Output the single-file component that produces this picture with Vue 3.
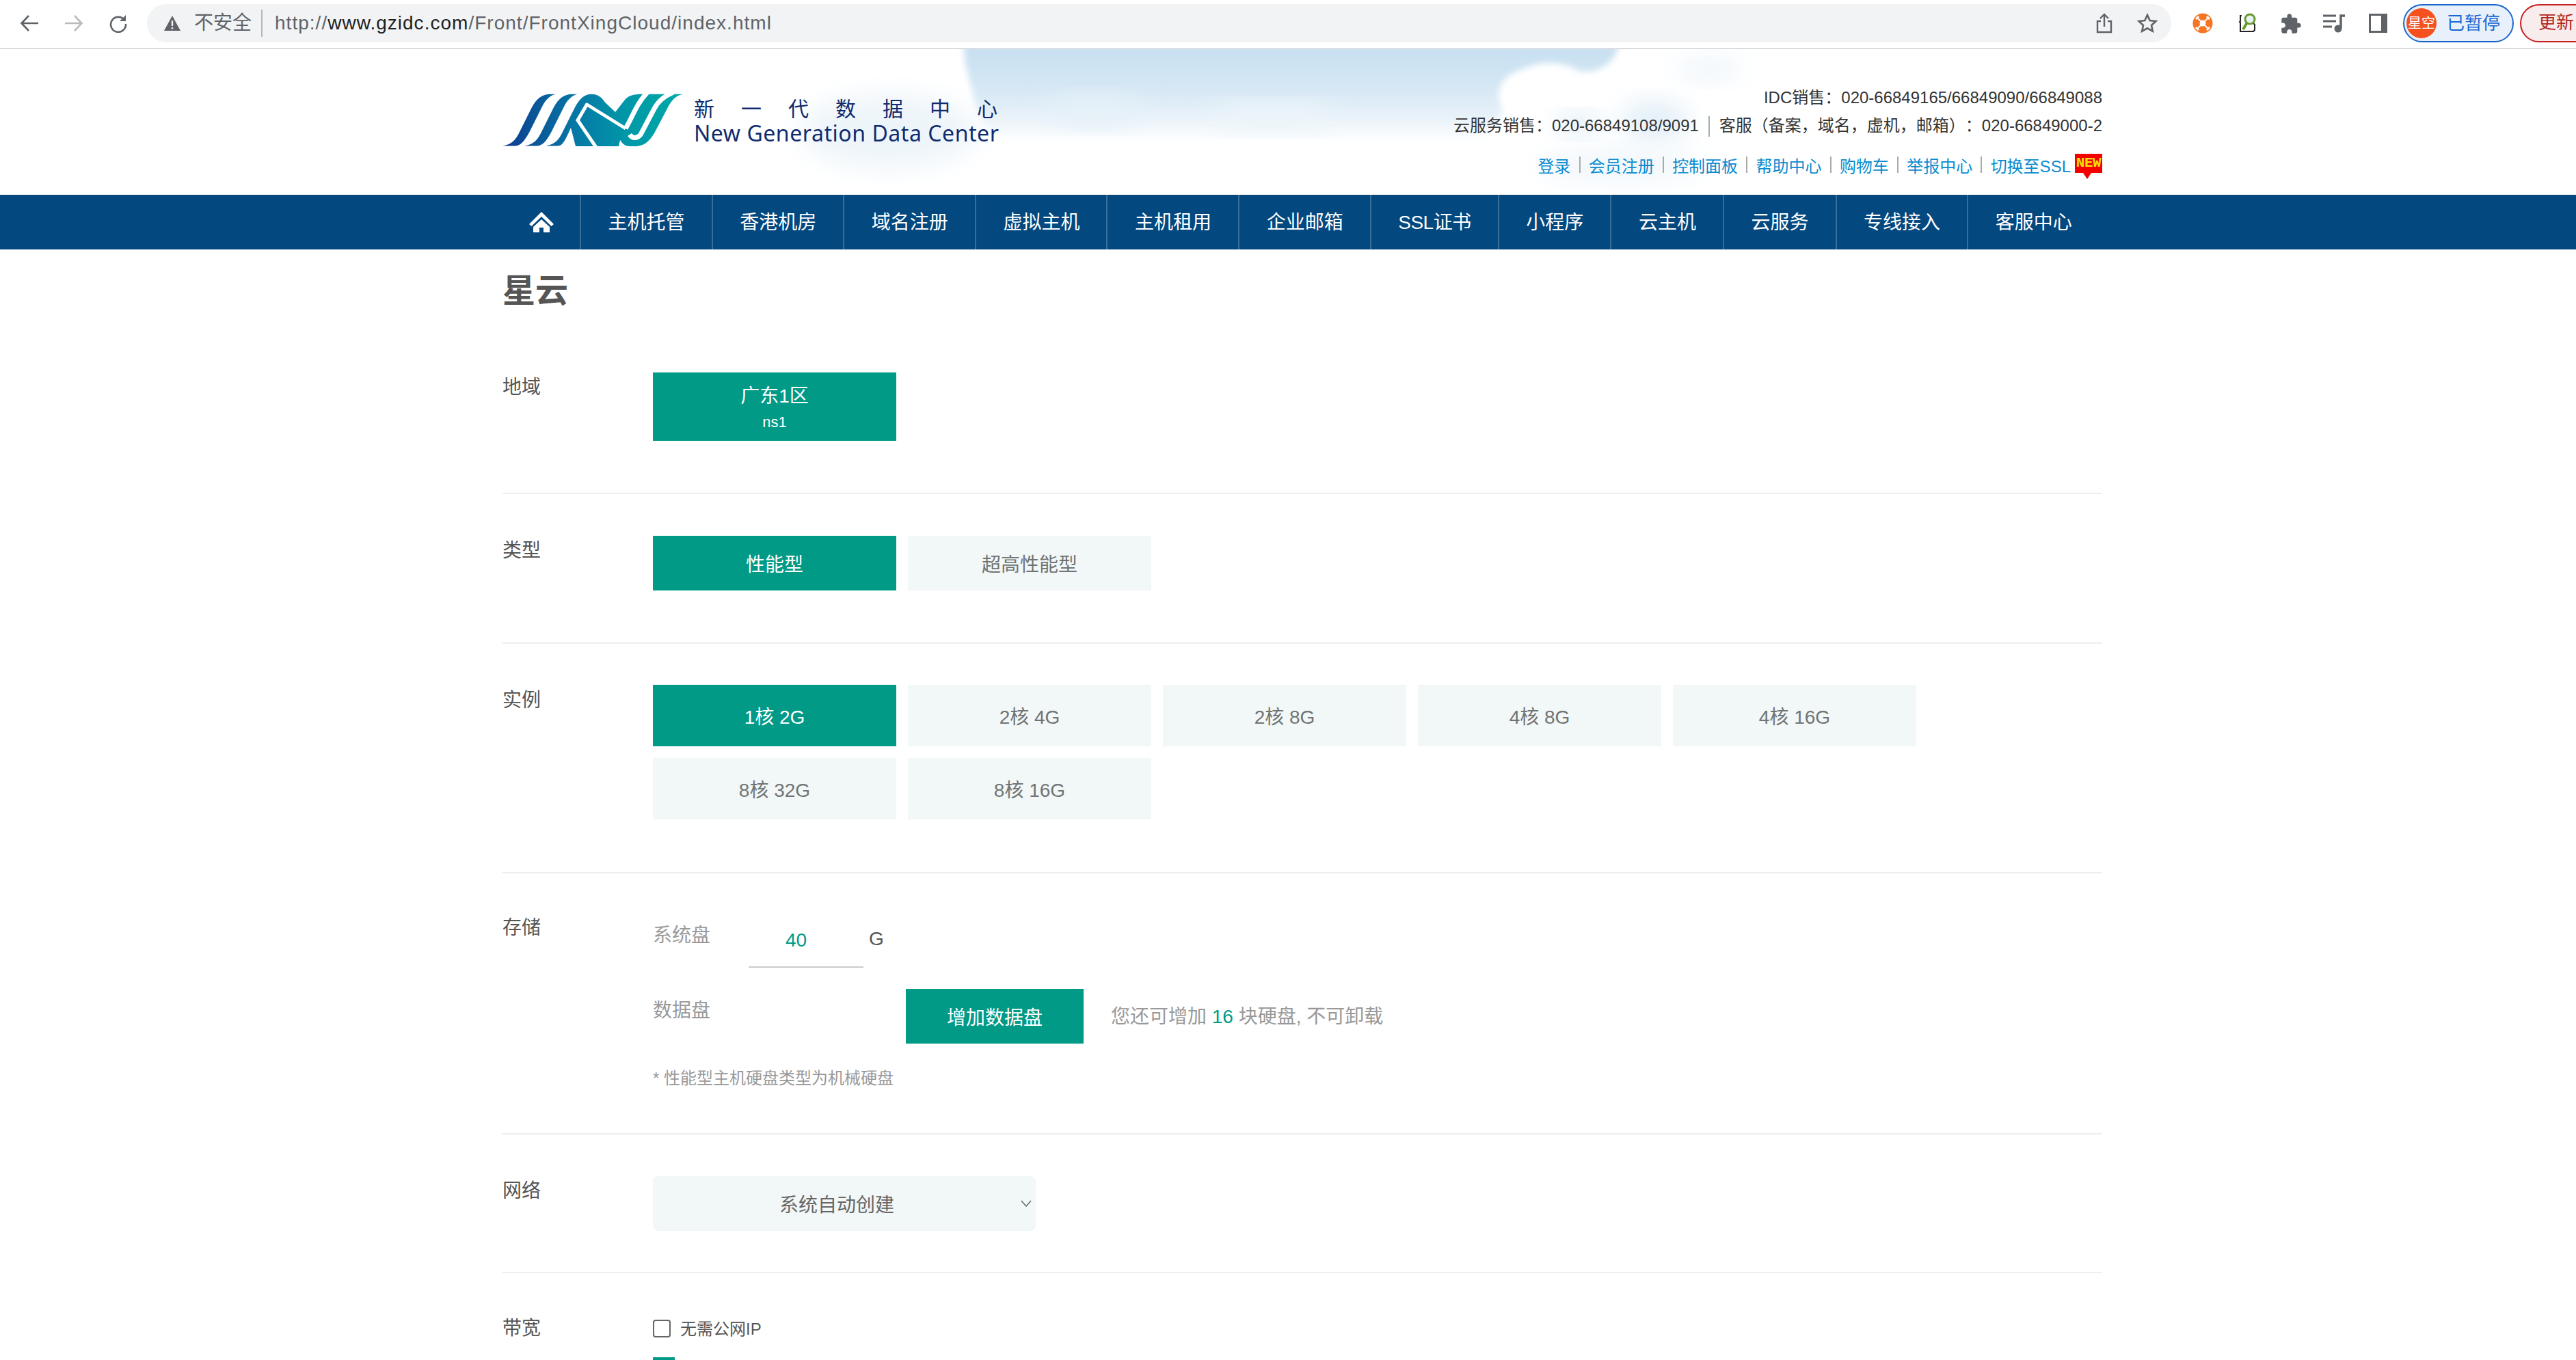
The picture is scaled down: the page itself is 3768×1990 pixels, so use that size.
<script setup>
const navItems = ['主机托管', '香港机房', '域名注册', '虚拟主机', '主机租用', '企业邮箱', 'SSL证书', '小程序', '云主机', '云服务', '专线接入', '客服中心']
const topLinks = ['登录', '会员注册', '控制面板', '帮助中心', '购物车', '举报中心']
const instances = ['1核 2G', '2核 4G', '2核 8G', '4核 8G', '4核 16G', '8核 32G', '8核 16G']
</script>

<template>
  <div class="page">
    <div class="toolbar">
      <svg class="tb-icon" viewBox="0 0 28 28" fill="none" stroke="#5f6368" stroke-width="2.6"><path d="M27 14H3M13 3 2.500 14 13 25" /></svg>
      <svg class="tb-icon fwd" viewBox="0 0 28 28" fill="none" stroke="#b9bbbe" stroke-width="2.6"><path d="M1 14h24M15 3l10.500 11L15 25" /></svg>
      <svg class="tb-icon fwd" viewBox="0 0 28 28" fill="none" stroke="#5f6368" stroke-width="2.6"><path d="M23 9.500A11 11 0 1 0 25 15" /><path d="M25 2v9h-9z" fill="#5f6368" stroke="none" /></svg>
      <div class="omnibox">
        <svg class="warn" viewBox="0 0 24 24"><path fill-rule="evenodd" fill="#5f6368" d="M12 1 24 23H0zM10.800 8v8h2.400V8zm0 10v2.500h2.400V18z" /></svg>
        <span class="not-secure">不安全</span>
        <span class="url"><i>http://</i><b>www.gzidc.com</b><i>/Front/FrontXingCloud/index.html</i></span>
        <svg class="share" viewBox="0 0 24 30" fill="none" stroke="#5f6368" stroke-width="2.400"><path d="M7 12H2v16h20V12h-5M12 20V2M6 8l6-6 6 6" /></svg>
        <svg class="star" viewBox="0 0 30 30" fill="none" stroke="#5f6368" stroke-width="2.600"><path d="m15 3 3.700 8 8.800 1-6.500 6 1.800 8.700L15 22.300 7.200 26.700 9 18l-6.500-6 8.800-1z" /></svg>
      </div>
      <svg class="ext orange" viewBox="0 0 30 30">
        <circle cx="15" cy="15" r="14.500" fill="#f57524" />
        <circle cx="15" cy="15" r="4.500" fill="#fff" />
        <path d="M8 8l14 14M22 8 8 22" stroke="#fff" stroke-width="2" />
        <path d="M5 9l4-4M21 5l4 4M5 21l4 4M21 25l4-4" stroke="#fff" stroke-width="3" />
      </svg>
      <svg class="ext lens" viewBox="0 0 26 30" fill="none">
        <path d="M5 4H3v8l-1 1 1 1v13h19l2-2v-8l-3-3h-6" stroke="#222" stroke-width="2" />
        <path d="M13 14 7 24" stroke="#6a9a2e" stroke-width="4" />
        <circle cx="17" cy="9" r="7" fill="#e6f2f6" stroke="#6a9a2e" stroke-width="3" />
      </svg>
      <svg class="ext puzzle" viewBox="1.800 1 21.400 21"><path fill="#5f6368" d="M20.500 11H19V7c0-1.100-.9-2-2-2h-4V3.500C13 2.120 11.880 1 10.500 1S8 2.120 8 3.500V5H4c-1.100 0-1.990.9-1.990 2v3.800H3.500c1.490 0 2.700 1.210 2.700 2.700s-1.210 2.700-2.700 2.700H2V20c0 1.100.9 2 2 2h3.800v-1.500c0-1.490 1.210-2.700 2.700-2.700 1.490 0 2.700 1.210 2.700 2.700V22H17c1.100 0 2-.9 2-2v-4h1.500c1.380 0 2.500-1.120 2.500-2.500S21.880 11 20.500 11z" /></svg>
      <svg class="ext music" viewBox="0 0 32 28" fill="none">
        <path d="M0 3h19M0 11h19M0 19h13" stroke="#5f6368" stroke-width="3" />
        <path d="M26 21V3h6" stroke="#5f6368" stroke-width="3.500" />
        <circle cx="22" cy="22" r="5.500" fill="#5f6368" />
      </svg>
      <div class="side-panel"></div>
      <div class="profile">
        <span class="avatar">星空</span>
        <span class="paused">已暂停</span>
      </div>
      <div class="update">更新</div>
    </div>

    <header class="site-head">
      <svg class="sky" viewBox="0 0 3768 213" preserveAspectRatio="none" aria-hidden="true">
        <defs>
          <linearGradient id="skyFill" x1="0" y1="0" x2="0" y2="1">
            <stop offset="0" stop-color="#c6dff1" />
            <stop offset=".33" stop-color="#d5e7f4" />
            <stop offset=".55" stop-color="#e8f2f9" />
            <stop offset=".74" stop-color="#ffffff" />
          </linearGradient>
          <filter id="soft" x="-20%" y="-20%" width="140%" height="140%"><feGaussianBlur stdDeviation="5" /></filter>
          <filter id="softer" x="-30%" y="-30%" width="160%" height="160%"><feGaussianBlur stdDeviation="18" /></filter>
        </defs>
        <ellipse cx="1300" cy="120" rx="130" ry="55" fill="#eef5fa" filter="url(#softer)" />
        <path d="M1411 -6C1408 20 1418 40 1424 70 1430 100 1450 130 1480 150L1500 185H2110L2150 160C2160 130 2195 110 2198 90 2185 60 2195 40 2225 30 2260 14 2290 20 2310 32 2340 36 2362 20 2368 -6Z" fill="url(#skyFill)" filter="url(#soft)" />
        <ellipse cx="1600" cy="90" rx="70" ry="22" fill="#e6f1f8" filter="url(#softer)" />
        <ellipse cx="1860" cy="100" rx="90" ry="20" fill="#edf5fa" filter="url(#softer)" />
        <ellipse cx="2310" cy="110" rx="34" ry="16" fill="#dfedf7" filter="url(#softer)" />
        <ellipse cx="2420" cy="105" rx="50" ry="30" fill="#e2eff8" filter="url(#softer)" />
        <ellipse cx="2500" cy="30" rx="50" ry="18" fill="#eff6fb" filter="url(#softer)" />
        <ellipse cx="2370" cy="170" rx="120" ry="24" fill="#f1f7fb" filter="url(#softer)" />
      </svg>
      <div class="head-inner">
        <div class="brand">
          <svg class="logo" viewBox="0 0 264 78">
            <defs>
              <linearGradient id="logoFill" gradientUnits="userSpaceOnUse" x1="0" y1="0" x2="264" y2="0">
                <stop offset="0" stop-color="#0e3a8e" />
                <stop offset=".4" stop-color="#0677a5" />
                <stop offset=".68" stop-color="#0097a8" />
                <stop offset="1" stop-color="#00aaa6" />
              </linearGradient>
            </defs>
            <g fill="url(#logoFill)">
              <path d="M0 76.500c10-1.500 17-5.500 23-16.500l20-40c7-13 15-19.300 27-19.300h8c-6 1.300-13 5.300-19 16.300l-20 40c-7 13-13 19.500-21 19.500z" />
              <path d="M32 76.500c10-1.500 17-5.500 23-16.500l20-40c7-13 15-19.300 27-19.300h8c-6 1.300-13 5.300-19 16.300l-20 40c-7 13-13 19.500-21 19.500z" />
              <path d="M63 76.500c10-1.500 17-5.500 23-16.500l20-40c7-13 14-19.300 24-19.300 8 0 14 3 20 12L165 27l14-18C184 3 191 .7 204 .7H264C256 2 249 7 243 18L222 58C214 71 206 77 194 77H186C180 77 176 74 172 68L170 77H107L100 50C92 68 88 76.500 81 76.500Z" />
            </g>
            <g fill="none" stroke="#fff">
              <path d="M122 15 180 51" stroke-width="4.500" />
              <path d="M180 51C190 35 195 16 212 -2" stroke-width="7" />
              <path d="M186 60C190 66 197 66 202 60L222 22C228 10 238 3 250 -2" stroke-width="7" />
              <path d="M124 15 110 39 138 80" stroke-width="5" />
            </g>
          </svg>
          <div class="brand-text">
            <div class="brand-cn">新一代数据中心</div>
            <div class="brand-en">New Generation Data Center</div>
          </div>
        </div>
        <div class="contact">
          <div class="contact-line">IDC销售：020-66849165/66849090/66849088</div>
          <div class="contact-line">云服务销售：020-66849108/9091<span class="bar wide-bar"></span>客服（备案，域名，虚机，邮箱）：020-66849000-2</div>
          <div class="links">
            <template v-for="link in topLinks" :key="link">
              <a>{{ link }}</a><span class="bar"></span>
            </template>
            <a>切换至SSL</a>
            <span class="new-badge">NEW</span>
          </div>
        </div>
      </div>
    </header>

    <nav class="nav">
      <div class="nav-home">
        <svg viewBox="0 0 36 30" width="36" height="30"><path fill="#fff" d="M18 0 36 18l-3.500 3L18 7 3.500 21 0 18z" /><path fill="#fff" d="M18 11 30 22v8H21v-7h-6v7H6v-8z" /></svg>
      </div>
      <a v-for="item in navItems" :key="item" class="nav-item" :class="{ ssl: item === 'SSL证书' }">{{ item }}</a>
    </nav>

    <main class="content">
      <h1 class="title">星云</h1>

      <section class="row">
        <div class="label">地域</div>
        <div class="opts"><button class="opt on tall"><span>广东1区</span><small>ns1</small></button></div>
      </section>

      <section class="row">
        <div class="label">类型</div>
        <div class="opts">
          <button class="opt on">性能型</button>
          <button class="opt">超高性能型</button>
        </div>
      </section>

      <section class="row">
        <div class="label">实例</div>
        <div class="opts wide">
          <button v-for="(item, i) in instances" :key="item" class="opt mid" :class="{ on: i === 0 }">{{ item }}</button>
        </div>
      </section>

      <section class="row tight store">
        <div class="label">存储</div>
        <div class="storage">
          <div class="disk-row">
            <span class="disk-name sys">系统盘</span>
            <span class="disk-input">40</span>
            <span class="unit">G</span>
          </div>
          <div class="disk-row data">
            <span class="disk-name data-name">数据盘</span>
            <button class="opt on add">增加数据盘</button>
            <span class="hint">您还可增加 <em>16</em> 块硬盘, 不可卸载</span>
          </div>
          <div class="note">* 性能型主机硬盘类型为机械硬盘</div>
        </div>
      </section>

      <section class="row tight">
        <div class="label">网络</div>
        <div class="select">
          <span>系统自动创建</span>
          <svg viewBox="0 0 16 10" width="16" height="10" fill="none" stroke="#666" stroke-width="1.500"><path d="M1 1l7 8 7-8" /></svg>
        </div>
      </section>

      <section class="row last">
        <div class="label">带宽</div>
        <div>
          <label class="check"><span class="box"></span><span class="check-text">无需公网IP</span></label>
          <div class="slider-stub"></div>
        </div>
      </section>
    </main>
  </div>
</template>

<style>
html, body {
  margin: 0;
  background: #fff;
  overflow: hidden;
}
</style>

<style scoped>
* {
  box-sizing: border-box;
}
.page {
  width: 3768px;
  height: 1990px;
  overflow: hidden;
  font-family: "Liberation Sans", "Noto Sans CJK SC", sans-serif;
  color: #555;
  font-size: 28px;
}

/* browser bar */
.toolbar {
  height: 72px;
  padding: 0 0 2px 29px;
  border-bottom: 2px solid #dadce0;
  display: flex;
  align-items: center;
  overflow: hidden;
  background: #fff;
}
.tb-icon {
  width: 28px;
  height: 28px;
  flex: none;
}
.fwd {
  margin-left: 37px;
}
.omnibox {
  margin-left: 28px;
  width: 2961px;
  height: 56px;
  flex: none;
  border-radius: 28px;
  background: #f1f3f4;
  display: flex;
  align-items: center;
  padding-left: 25px;
  color: #5f6368;
}
.warn {
  width: 24px;
  height: 24px;
}
.not-secure {
  margin-left: 20px;
  font-size: 28px;
  padding-right: 14px;
  border-right: 2px solid #b5b7ba;
  line-height: 40px;
}
.url {
  margin-left: 18px;
  font-size: 28px;
  letter-spacing: 1.02px;
  flex: 1;
}
.url i {
  font-style: normal;
}
.url b {
  font-weight: 400;
  color: #202124;
}
.share {
  width: 24px;
  height: 30px;
  margin-right: 36px;
}
.star {
  width: 30px;
  height: 30px;
  margin-right: 20px;
}
.ext {
  flex: none;
}
.orange {
  width: 30px;
  height: 30px;
  margin-left: 31px;
}
.lens {
  width: 26px;
  height: 30px;
  margin-left: 37px;
}
.puzzle {
  width: 29px;
  height: 29px;
  margin-left: 37px;
}
.music {
  width: 32px;
  height: 28px;
  margin-left: 32px;
}
.side-panel {
  flex: none;
  width: 27px;
  height: 28px;
  margin-left: 35px;
  border: 3px solid #5f6368;
  border-right-width: 9px;
  background: #fff;
}
.profile {
  flex: none;
  width: 162px;
  height: 56px;
  margin-left: 23px;
  border: 2.500px solid #1a66cc;
  border-radius: 28px;
  background: #e8f0fb;
  display: flex;
  align-items: center;
  padding-left: 3px;
}
.avatar {
  width: 44px;
  height: 44px;
  border-radius: 50%;
  background: #f4511e;
  color: #fff;
  font-size: 20px;
  line-height: 44px;
  text-align: center;
  white-space: nowrap;
  overflow: hidden;
}
.paused {
  margin-left: 15px;
  font-size: 26px;
  line-height: 46px;
  color: #1967d2;
}
.update {
  flex: none;
  width: 140px;
  height: 56px;
  margin-left: 9px;
  padding-left: 25px;
  border: 2.500px solid #c5221f;
  border-radius: 28px;
  background: #f9eced;
  color: #b3261e;
  font-size: 26px;
  line-height: 50px;
}

/* site header */
.site-head {
  position: relative;
  height: 213px;
  background: #fff;
}
.sky {
  position: absolute;
  left: 0;
  top: 0;
  width: 3768px;
  height: 213px;
}
.head-inner {
  position: relative;
  width: 2340px;
  height: 213px;
  margin-left: 735px;
  display: flex;
  justify-content: space-between;
}
.brand {
  display: flex;
  padding-top: 65px;
}
.logo {
  width: 264px;
  height: 78px;
  flex: none;
}
.brand-text {
  margin-left: 16px;
  margin-top: 5px;
  color: #102c6f;
}
.brand-cn {
  font-size: 30px;
  letter-spacing: 39px;
  line-height: 36px;
  white-space: nowrap;
}
.brand-en {
  font-family: "Noto Sans", "Liberation Sans", sans-serif;
  font-size: 32px;
  line-height: 34px;
  letter-spacing: 0.55px;
  white-space: nowrap;
}
.contact {
  padding-top: 50px;
  display: flex;
  flex-direction: column;
  align-items: flex-end;
  font-size: 24px;
  color: #333;
  text-spacing-trim: space-all;
}
.contact-line {
  line-height: 41px;
  white-space: nowrap;
}
.bar {
  display: inline-block;
  width: 2px;
  height: 24px;
  margin: 0 12.200px;
  background: #aaa;
  vertical-align: -4px;
}
.wide-bar {
  height: 30px;
  margin: 0 14px;
  vertical-align: -8px;
}
.links {
  margin-top: 17px;
  display: flex;
  align-items: center;
  height: 40px;
  color: #0a8bcf;
  white-space: nowrap;
}
.new-badge {
  margin-left: 6px;
  width: 40px;
  height: 28px;
  margin-top: -4px;
  background: #f30000;
  color: #f4e200;
  font-family: "Liberation Mono", monospace;
  font-size: 21px;
  font-weight: 700;
  line-height: 28px;
  text-align: center;
  letter-spacing: -0.5px;
  position: relative;
}
.new-badge::after {
  content: "";
  position: absolute;
  left: 12px;
  top: 28px;
  border-top: 9px solid #f30000;
  border-left: 6px solid transparent;
  border-right: 6px solid transparent;
}

/* main nav */
.nav {
  height: 80px;
  padding-left: 735px;
  background: #03487f;
  display: flex;
}
.nav-home {
  width: 115px;
  flex: none;
  border-right: 2px solid #3a6e97;
  display: flex;
  align-items: center;
  justify-content: center;
}
.nav-item {
  flex: none;
  padding: 0 39px 0 39.600px;
  border-right: 2px solid #3a6e97;
  color: #fff;
  font-size: 28px;
  line-height: 82px;
  white-space: nowrap;
}
.nav-item.ssl {
  letter-spacing: -0.5px;
}
.nav-item:last-child {
  border-right: 0;
}

/* form rows */
.content {
  width: 2340px;
  margin-left: 735px;
}
.title {
  margin: 0;
  height: 119px;
  font-size: 48px;
  font-weight: 700;
  line-height: 121px;
  color: #555;
}
.row {
  display: flex;
  padding: 61px 0 76px;
  border-bottom: 2px solid #eeeeee;
}
.row.tight {
  padding-bottom: 60px;
}
.row.store {
  padding-top: 58px;
}
.row.last {
  border-bottom: 0;
  padding-bottom: 0;
}
.label {
  width: 220px;
  flex: none;
  line-height: 44px;
}
.last .label {
  line-height: 40px;
}
.opts {
  display: flex;
  flex-wrap: wrap;
  gap: 17px;
  width: 1880px;
}
.opts.wide {
  margin: -1px 0 1px;
}
.opt {
  width: 356px;
  height: 80px;
  border: 0;
  padding: 0;
  background: #f2f7f7;
  color: #707474;
  font: inherit;
  font-size: 28px;
}
.opt.on {
  background: #009a87;
  color: #fff;
}
.opt.tall {
  height: 100px;
  padding-top: 3px;
  display: flex;
  flex-direction: column;
  align-items: center;
  justify-content: center;
  gap: 4px;
}
.opt.tall small {
  font-size: 22px;
  line-height: 30px;
}
.opt.tall span {
  line-height: 38px;
}
.opt.mid {
  height: 90px;
}

/* storage */
.storage {
  flex: 1;
}
.disk-row {
  display: flex;
  align-items: flex-start;
  height: 80px;
}
.disk-row.data {
  margin-top: 31px;
}
.disk-name {
  color: #999;
  line-height: 66px;
}
.sys {
  width: 140px;
}
.data-name {
  width: 370px;
  line-height: 64px;
}
.disk-input {
  width: 168px;
  height: 80px;
  padding-left: 54px;
  border-bottom: 2px solid #ccc;
  color: #009a87;
  line-height: 80px;
}
.unit {
  margin-left: 8px;
  line-height: 76px;
}
.add {
  width: 260px;
  flex: none;
}
.hint {
  margin-left: 40px;
  color: #999;
  line-height: 82px;
}
.hint em {
  font-style: normal;
  color: #009a87;
}
.note {
  margin-top: 31px;
  font-size: 24px;
  line-height: 40px;
  color: #999;
}
.select {
  width: 560px;
  height: 80px;
  padding-right: 6px;
  border-radius: 8px;
  background: #f2f7f7;
  color: #666;
  display: flex;
  align-items: center;
}
.select span {
  flex: 1;
  text-align: center;
}
.check {
  display: flex;
  align-items: center;
  height: 40px;
  font-size: 24px;
}
.check-text {
  margin-top: -4px;
}
.box {
  width: 26px;
  height: 26px;
  margin-right: 14px;
  border: 2px solid #666;
  border-radius: 4px;
  background: #fff;
}
.slider-stub {
  margin-top: 22px;
  width: 32px;
  height: 10px;
  background: #009a87;
}
</style>
